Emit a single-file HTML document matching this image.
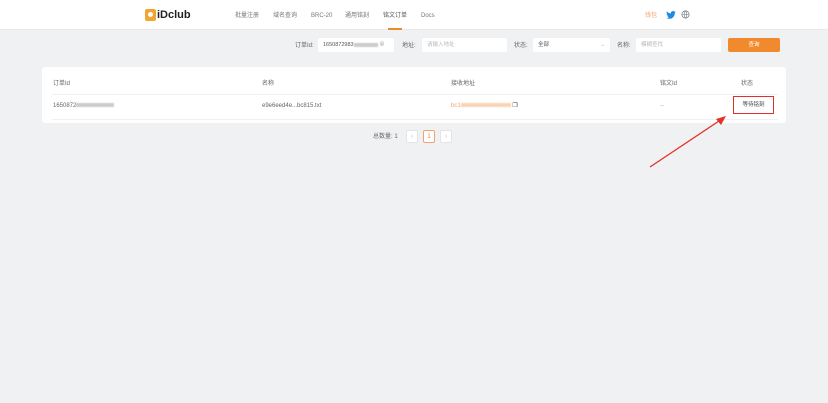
<!DOCTYPE html>
<html><head><meta charset="utf-8"><style>
*{margin:0;padding:0;box-sizing:border-box}
body{width:828px;height:403px;background:#f0f1f3;font-family:"Liberation Sans","Noto Sans CJK SC",sans-serif;font-size:6px;line-height:8px;color:#666;position:relative;overflow:hidden}
.a{position:absolute;white-space:nowrap;line-height:8px}
.hdr{position:absolute;left:0;top:0;width:828px;height:30px;background:#fff;border-bottom:1px solid #e8e8e8}
.inp{position:absolute;height:14px;background:#fff;border-radius:2px;font-size:5.5px;color:#bbb;padding:0 5px;line-height:15px;white-space:nowrap}
.card{position:absolute;left:42px;top:67px;width:744px;height:56px;background:#fff;border-radius:3px}
.blur{display:inline-block;background:#ccc;height:4px;vertical-align:middle;filter:blur(.6px)}
.pg{position:absolute;top:130px;width:12px;height:13px;background:#fff;border:1px solid #e4e4e4;border-radius:2px;font-size:6px;text-align:center;line-height:12px;color:#bbb}
</style></head><body>
<div class="hdr"></div>
<div class="a" style="left:145px;top:9px;width:11px;height:12px;background:#f3a531;border-radius:2px"></div>
<div class="a" style="left:148px;top:12px;width:5px;height:5px;background:#fff;border-radius:50%"></div>
<div class="a" style="left:157px;top:9px;font-size:11px;line-height:12px;font-weight:bold;color:#222">iDclub</div>
<div class="a" style="left:235px;top:12px;color:#777">批量注册</div>
<div class="a" style="left:273px;top:12px;color:#777">域名查询</div>
<div class="a" style="left:311px;top:12px;color:#777">BRC-20</div>
<div class="a" style="left:345px;top:12px;color:#777">通用铭刻</div>
<div class="a" style="left:383px;top:12px;color:#555">铭文订单</div>
<div class="a" style="left:388px;top:28px;width:14px;height:2px;background:#f08a2c"></div>
<div class="a" style="left:421px;top:12px;color:#777">Docs</div>
<div class="a" style="left:645px;top:12px;color:#f4a070">钱包</div>
<svg class="a" style="left:666px;top:11px" width="10" height="8" viewBox="0 0 24 20"><path fill="#1d8ce0" d="M24 2.4a10 10 0 0 1-2.8.8A5 5 0 0 0 23.3.5a10 10 0 0 1-3.1 1.2A4.9 4.9 0 0 0 11.8 6 14 14 0 0 1 1.7.9a4.9 4.9 0 0 0 1.5 6.6A4.9 4.9 0 0 1 1 6.9a4.9 4.9 0 0 0 3.9 4.8 5 5 0 0 1-2.2.1 4.9 4.9 0 0 0 4.6 3.4A9.9 9.9 0 0 1 0 17.3 14 14 0 0 0 7.5 19.5c9.1 0 14-7.5 14-14v-.6A10 10 0 0 0 24 2.4z"/></svg>
<svg class="a" style="left:681px;top:10px" width="9" height="9" viewBox="0 0 10 10"><circle cx="5" cy="5" r="4" fill="none" stroke="#777" stroke-width=".8"/><path d="M1 5h8M5 1c-2 2-2 6 0 8M5 1c2 2 2 6 0 8" fill="none" stroke="#777" stroke-width=".6"/></svg>

<div class="a" style="left:295px;top:42px">订单Id:</div>
<div class="inp" style="left:318px;top:38px;width:76px;color:#555">1650872983<span class="blur" style="width:24px"></span> <span style="color:#999">⊗</span></div>
<div class="a" style="left:402px;top:42px">地址:</div>
<div class="inp" style="left:422px;top:38px;width:85px">请输入地址</div>
<div class="a" style="left:514px;top:42px">状态:</div>
<div class="inp" style="left:533px;top:38px;width:77px;color:#555">全部<span style="position:absolute;right:5px;color:#bbb">⌄</span></div>
<div class="a" style="left:617px;top:42px">名称:</div>
<div class="inp" style="left:636px;top:38px;width:85px">模糊查找</div>
<div class="a" style="left:728px;top:38px;width:52px;height:14px;background:#f08a2c;border-radius:2px;color:#fff;text-align:center;line-height:15px;font-size:5.5px">查询</div>

<div class="card"></div>
<div class="a" style="left:52px;top:94px;width:726px;height:1px;background:#f0f0f0"></div>
<div class="a" style="left:52px;top:119px;width:726px;height:1px;background:#f0f0f0"></div>
<div class="a" style="left:53px;top:80px">订单Id</div>
<div class="a" style="left:262px;top:80px">名称</div>
<div class="a" style="left:451px;top:80px">接收地址</div>
<div class="a" style="left:660px;top:80px">铭文Id</div>
<div class="a" style="left:741px;top:80px">状态</div>
<div class="a" style="left:53px;top:102px">1650872<span class="blur" style="width:38px"></span></div>
<div class="a" style="left:262px;top:102px">e9e6eed4e...bc815.txt</div>
<div class="a" style="left:451px;top:102px;color:#f4a070">bc1<span class="blur" style="width:50px;background:#f9d3b4"></span> <span style="color:#333">❐</span></div>
<div class="a" style="left:660px;top:102px;color:#aaa">--</div>
<div class="a" style="left:733px;top:96px;width:41px;height:18px;border:1.5px solid #e0302a;font-size:5.5px;color:#444;text-align:center;line-height:17px">等待铭刻</div>

<svg class="a" style="left:640px;top:110px" width="100" height="65"><line x1="10" y1="57" x2="82" y2="9" stroke="#e53228" stroke-width="1.3"/><path d="M86 6 L76 9 L81 15 Z" fill="#e53228"/></svg>

<div class="a" style="left:373px;top:133px">总数量: 1</div>
<div class="pg" style="left:406px">‹</div>
<div class="pg" style="left:423px;border-color:#f4a070;color:#f08a2c">1</div>
<div class="pg" style="left:440px">›</div>
</body></html>
